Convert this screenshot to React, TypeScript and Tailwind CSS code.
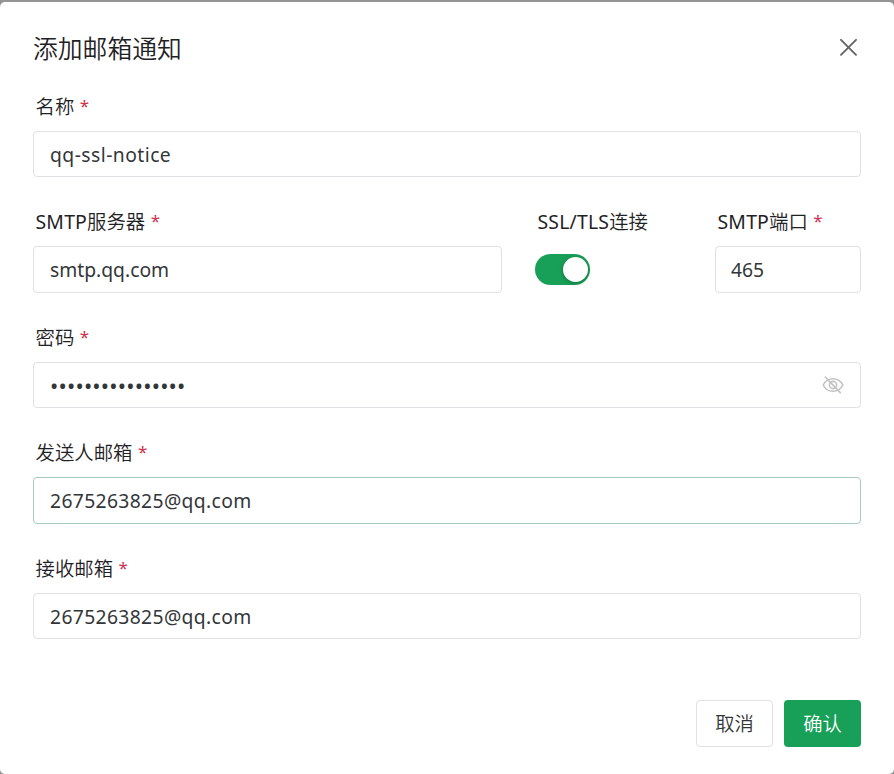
import type { ReactNode } from "react";
import clsx from "clsx";

type FieldProps = {
  prefix?: string;
  label: string;
  required?: boolean;
  className?: string;
  children: ReactNode;
};

function Field({ prefix, label, required = true, className, children }: FieldProps) {
  return (
    <div className={clsx("flex h-[115.5px] flex-col", className)}>
      <div className="flex h-[39px] items-start pl-[2.5px] text-[19.4px] leading-[30px] font-[350] text-[#1f2225]">
        <span>
          {prefix && <span className="font-normal tracking-[0.2px]">{prefix}</span>}
          {label}
        </span>
        {required && <span className="ml-[5.5px] text-[17px] leading-[28px] font-normal text-[#d03050]">*</span>}
      </div>
      {children}
    </div>
  );
}

type InputBoxProps = {
  active?: boolean;
  suffix?: ReactNode;
  className?: string;
  children: ReactNode;
};

function InputBox({ active, suffix, className, children }: InputBoxProps) {
  return (
    <div
      className={clsx(
        "flex h-[46.5px] items-center justify-between rounded-[4px] border pr-4 text-[19.3px] leading-[30px] text-[#333639]",
        active ? "border-[#a9cbbf]" : "border-[#e0e0e6]",
        className ?? "pt-px pl-4"
      )}
    >
      {children}
      {suffix}
    </div>
  );
}

function CloseIcon() {
  return (
    <svg width="18" height="18" viewBox="0 0 18 18" fill="none" stroke="#666666" strokeWidth="1.9" strokeLinecap="round">
      <path d="M1 .8 16 15.8M16 .8 1 15.8" />
    </svg>
  );
}

function EyeOffIcon() {
  return (
    <svg width="22" height="18" viewBox="0 0 22 18" fill="none" stroke="#c2c2c2" strokeWidth="1.6" strokeLinecap="round">
      <path d="M1.2 9C3 5.2 6.4 2.7 11 2.7S19 5.2 20.8 9C19 12.8 15.6 15.3 11 15.3S3 12.8 1.2 9Z" />
      <circle cx="11" cy="9" r="3.6" />
      <path d="M3.2 1 18.3 16.6" />
    </svg>
  );
}

function Toggle() {
  return (
    <div className="mt-2 flex h-[31px] w-[55px] items-center justify-end rounded-full bg-[#18a058] pr-[2.5px]">
      <div className="size-[25px] rounded-full bg-white shadow-[0_1px_4px_rgba(0,0,0,0.3)]" />
    </div>
  );
}

export default function App() {
  return (
    <div className="h-[774px] overflow-hidden bg-[#959393] pt-[2px] font-['Noto_Sans','Noto_Sans_CJK_SC',sans-serif]">
      <div className="flex h-[772px] flex-col rounded-[5px] bg-white pr-[33px] pl-[33px]">
        <header className="flex h-[89.9px] items-center justify-between pt-[2px] pr-[3px]">
          <h1 className="text-[24.8px] leading-[36px] font-[350] text-[#1f2225]">添加邮箱通知</h1>
          <CloseIcon />
        </header>

        <Field label="名称">
          <InputBox><span className="tracking-[0.46px]">qq-ssl-notice</span></InputBox>
        </Field>

        <div className="flex">
          <Field prefix="SMTP" label="服务器" className="w-[469px]">
            <InputBox>smtp.qq.com</InputBox>
          </Field>
          <Field prefix="SSL/TLS" label="连接" required={false} className="ml-[33px] w-[180px]">
            <Toggle />
          </Field>
          <Field prefix="SMTP" label="端口" className="w-[146px]">
            <InputBox className="pt-px pl-[15px]">465</InputBox>
          </Field>
        </div>

        <Field label="密码">
          <InputBox suffix={<EyeOffIcon />} className="pb-px pl-4">
            <span className="text-[22px] tracking-[0.2px]">••••••••••••••••</span>
          </InputBox>
        </Field>

        <Field label="发送人邮箱">
          <InputBox active><span className="tracking-[0.36px]">2675263825@qq.com</span></InputBox>
        </Field>

        <Field label="接收邮箱">
          <InputBox><span className="tracking-[0.36px]">2675263825@qq.com</span></InputBox>
        </Field>

        <footer className="mt-[30.6px] flex justify-end gap-[11px] text-[19.3px] font-[350]">
          <button className="h-[47px] w-[77px] rounded-[4px] border border-[#e0e0e6] pt-[2px] text-[#333639]">取消</button>
          <button className="h-[47px] w-[77px] rounded-[4px] bg-[#18a058] pt-[2px] text-white">确认</button>
        </footer>
      </div>
    </div>
  );
}
